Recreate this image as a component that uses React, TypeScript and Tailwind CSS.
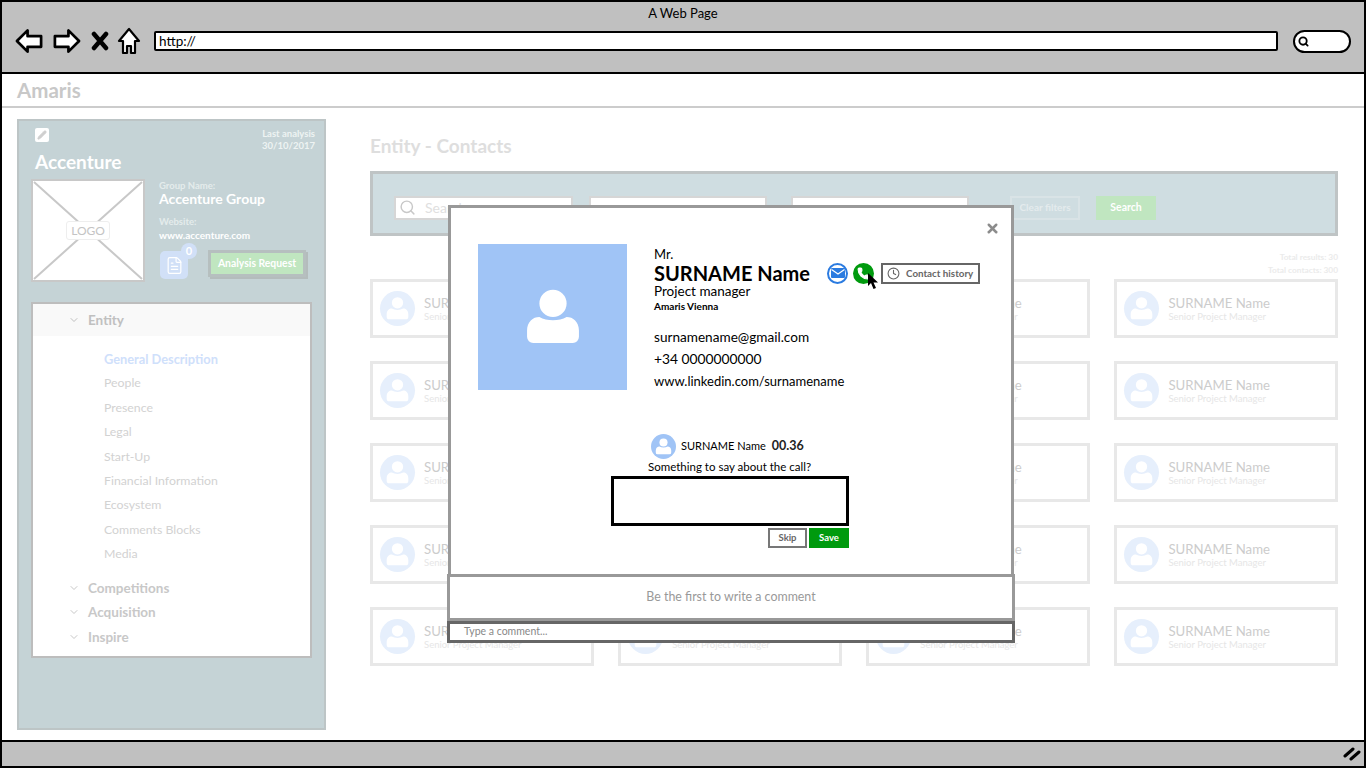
import React from 'react';
import { ChevronDown, Search, FileText, Pencil, Phone, Clock, X } from 'lucide-react';

const MENU_ITEMS = ['People', 'Presence', 'Legal', 'Start-Up', 'Financial Information', 'Ecosystem', 'Comments Blocks', 'Media'];
const CARDS = Array.from({ length: 20 }, (_, i) => i);

const Person: React.FC<{ className?: string; fill?: string }> = ({ className, fill = '#ffffff' }) => (
    <svg viewBox="0 0 34 34" className={className}>
        <circle cx="17" cy="11.5" r="5.5" fill={fill} />
        <path d="M9 27.5a2.5 2.5 0 0 1-2.5-2.5v-2.5c0-3.6 2.4-5.5 5-5.5 3 1.800 8 1.800 11 0 2.600 0 5 1.900 5 5.500V25a2.500 2.500 0 0 1-2.500 2.500z" fill={fill} />
    </svg>
);

const ContactCard: React.FC = () => (
    <div className="flex h-[59px] items-center border-[3px] border-[#e8e8e8] bg-white pl-[7px]">
        <div className="flex h-[35px] w-[35px] shrink-0 items-center justify-center rounded-full bg-[#e6effc]">
            <Person className="h-[35px] w-[35px]" />
        </div>
        <div className="ml-[9px]">
            <div className="text-[13.200px] leading-[16px] text-[#cccccc]">SURNAME Name</div>
            <div className="text-[9.500px] leading-[12px] text-[#e6e6e6]">Senior Project Manager</div>
        </div>
    </div>
);

const Sidebar: React.FC = () => (
    <aside className="flex h-[611px] w-[309px] shrink-0 flex-col border-2 border-[#bdc5c6] bg-[#c5d3d6] pl-[14px] pr-[9px] pt-[7px]">
        <div className="flex items-start justify-between pl-[2px]">
            <div className="flex h-[14px] w-[14px] items-center justify-center rounded-[2px] bg-white">
                <Pencil className="h-[10px] w-[10px] text-[#cfcfcf]" fill="#cfcfcf" />
            </div>
            <div className="text-right text-[9.500px] font-bold leading-[12px] text-[#eef3f3]">
                <div>Last analysis</div>
                <div>30/10/2017</div>
            </div>
        </div>
        <div className="-mt-[2px] pl-[2px] text-[19px] font-bold leading-[24px] text-white">Accenture</div>
        <div className="-ml-[2px] mt-[5px] flex">
            <div className="relative h-[103px] w-[114px] shrink-0 border-[2px] border-[#c8c8c8] bg-white">
                <svg viewBox="0 0 110 99" preserveAspectRatio="none" className="h-full w-full">
                    <path d="M1 1 109 98M109 1 1 98" stroke="#c8c8c8" strokeWidth="2" fill="none" />
                </svg>
                <div className="absolute left-[33px] top-[40px] flex h-[19px] w-[44px] items-center justify-center rounded-[3px] border border-[#eeeeee] bg-white text-[12px] text-[#c4c4c4]">LOGO</div>
            </div>
            <div className="ml-[14px] flex-1 text-white">
                <div className="mt-[1px] text-[9.500px] font-bold leading-[11px] text-[#e4ecec]">Group Name:</div>
                <div className="text-[14px] font-bold leading-[16px]">Accenture Group</div>
                <div className="mt-[9px] text-[9.500px] font-bold leading-[12px] text-[#e4ecec]">Website:</div>
                <div className="mt-[1px] text-[10px] font-bold leading-[13px]">www.accenture.com</div>
                <div className="mt-[8px] flex">
                    <div className="relative ml-[1px] mt-[1px] flex h-[28px] w-[28px] items-center justify-center rounded-[5px] bg-[#d1e0f7]">
                        <FileText className="h-[19px] w-[19px] text-white" strokeWidth={1.500} />
                        <div className="absolute -right-[9px] -top-[8px] flex h-[16px] w-[16px] items-center justify-center rounded-full bg-[#d1e0f7] text-[11px] font-bold text-white">0</div>
                    </div>
                    <div className="ml-[20px] flex h-[27px] w-[98px] items-center justify-center border-[3px] border-[#b6bfbf] bg-[#c0e6c0] text-[10.400px] font-bold text-white shadow-[2px_2px_0_#b4bcbc]">Analysis Request</div>
                </div>
            </div>
        </div>
        <div className="-ml-[2px] mt-[20px] h-[356px] w-[281px] border-[2px] border-[#bdbdbd] bg-white">
            <div className="flex h-[32px] items-center bg-[#f9f9f9] pl-[35px] text-[13.500px] font-bold text-[#c0c0c0]">
                <ChevronDown className="mr-[8px] h-[12px] w-[12px] text-[#c0c0c0]" />
                Entity
            </div>
            <div className="pl-[71px] pt-[11px] text-[12.300px] leading-[24.400px] text-[#d2d2d2]">
                <div className="text-[12.800px] font-bold text-[#cfe0fb]">General Description</div>
                {MENU_ITEMS.map((item) => (
                    <div key={item}>{item}</div>
                ))}
            </div>
            <div className="mt-[9px] pl-[35px] text-[13.500px] font-bold leading-[24.500px] text-[#c8c8c8]">
                {['Competitions', 'Acquisition', 'Inspire'].map((item) => (
                    <div key={item} className="flex items-center">
                        <ChevronDown className="mr-[8px] h-[12px] w-[12px] text-[#c8c8c8]" />
                        {item}
                    </div>
                ))}
            </div>
        </div>
    </aside>
);

const ContactsPanel: React.FC = () => (
    <main className="ml-[44px] w-[968px] shrink-0">
        <h1 className="mt-[16px] text-[19px] font-bold leading-[22px] text-[#dedede]">Entity - Contacts</h1>
        <div className="mt-[14px] flex h-[65px] items-center border-[3px] border-[#bfc4c5] bg-[#cfdde1] pl-[21px] pt-[8px]">
            <div className="flex h-[24px] w-[179px] items-center border-2 border-[#d6d6d6] bg-white pl-[3px]">
                <Search className="h-[17px] w-[17px] text-[#c8c8c8]" />
                <span className="ml-[9px] text-[14px] text-[#e0e0e0]">Search</span>
            </div>
            <div className="ml-[16px] h-[24px] w-[178px] border-2 border-[#d6d6d6] bg-white" />
            <div className="ml-[24px] h-[24px] w-[178px] border-2 border-[#d6d6d6] bg-white" />
            <div className="ml-[41px] flex h-[24px] w-[70px] items-center justify-center border-2 border-[#d9e3e6] text-[10px] font-bold text-[#e4ebed]">Clear filters</div>
            <div className="ml-[16px] flex h-[24px] w-[60px] items-center justify-center bg-[#c0e6c0] text-[10.500px] font-bold text-white">Search</div>
        </div>
        <div className="mt-[15px] text-right text-[8.300px] font-bold leading-[13px] text-[#ebebeb]">
            <div>Total results: 30</div>
            <div>Total contacts: 300</div>
        </div>
        <div className="mt-[2px] grid grid-cols-4 gap-x-[24.500px] gap-y-[23px]">
            {CARDS.map((card) => (
                <ContactCard key={card} />
            ))}
        </div>
    </main>
);

const ContactModal: React.FC = () => (
    <div className="absolute left-[446px] top-[203px] flex h-[438px] w-[566px] flex-col border-[3px] border-[#999999] bg-white text-black">
        <X className="absolute right-[11px] top-[13px] h-[15px] w-[15px] text-[#8c8c8c]" strokeWidth={4} />
        <div className="flex-1 pl-[27px] pt-[36px]">
            <div className="flex">
                <div className="flex h-[146px] w-[149px] shrink-0 items-center justify-center bg-[#a0c4f6]">
                    <Person className="h-[84px] w-[84px]" />
                </div>
                <div className="relative ml-[27px] pt-[3px]">
                    <div className="text-[13px] leading-[14px]">Mr.</div>
                    <div className="mt-[1px] text-[20px] font-bold leading-[22px]">SURNAME Name</div>
                    <div className="text-[13.500px] leading-[14px]">Project manager</div>
                    <div className="mt-[2px] text-[10px] font-bold leading-[12px]">Amaris Vienna</div>
                    <div className="mt-[14px] text-[13px] leading-[22px]">
                        <div className="text-[13.600px]">surnamename@gmail.com</div>
                        <div className="text-[13.800px]">+34 0000000000</div>
                        <div>www.linkedin.com/surnamename</div>
                    </div>
                    <div className="absolute left-[173px] top-[18px] flex h-[22px] items-center">
                        <div className="flex h-[21px] w-[21px] items-center justify-center rounded-full border-2 border-[#2b7be0] bg-white">
                            <svg viewBox="0 0 14 10" className="h-[10px] w-[14px]">
                                <rect width="14" height="10" rx="1" fill="#2b7be0" />
                                <path d="M0.500 1.500 7 6l6.500-4.500" stroke="#ffffff" strokeWidth="1.200" fill="none" />
                            </svg>
                        </div>
                        <div className="relative ml-[5px] flex h-[21px] w-[21px] items-center justify-center rounded-full bg-[#009a0e]">
                            <Phone className="h-[13px] w-[13px] text-white" fill="#ffffff" />
                            <svg viewBox="0 0 12 18" className="absolute left-[14px] top-[9px] h-[18px] w-[12px]">
                                <path d="M1 1v13l3-3 2.500 6 2.500-1-2.500-5.500H11z" fill="#000000" />
                            </svg>
                        </div>
                        <div className="ml-[7px] flex h-[21px] w-[99px] items-center border-2 border-[#666666] pl-[4px] text-[9.800px] font-bold text-[#666666]">
                            <Clock className="mr-[6px] h-[13px] w-[13px]" />
                            Contact history
                        </div>
                    </div>
                </div>
            </div>
            <div className="ml-[133px] mt-[42px] w-[238px]">
                <div className="ml-[40px] flex h-[25px] items-center">
                    <div className="h-[25px] w-[25px] rounded-full bg-[#a0c4f6]">
                        <Person className="h-[25px] w-[25px]" />
                    </div>
                    <span className="ml-[5px] text-[11px]">SURNAME Name</span>
                    <span className="ml-[6px] text-[12.500px] font-bold text-[#222222]">00.36</span>
                </div>
                <div className="ml-[37px] mt-[1px] text-[11.500px] leading-[14px]">Something to say about the call?</div>
                <div className="mt-[2px] h-[50px] border-[3px] border-black bg-white" />
                <div className="mt-[2px] flex justify-end gap-[2px]">
                    <div className="flex h-[20px] w-[39px] items-center justify-center border-2 border-[#777777] text-[9.500px] font-bold text-[#666666]">Skip</div>
                    <div className="flex h-[20px] w-[40px] items-center justify-center bg-[#009a0e] text-[9.500px] font-bold text-white">Save</div>
                </div>
            </div>
        </div>
        <div className="-mx-[4px] flex h-[47px] items-center justify-center border-[3px] border-[#999999] bg-white text-[12.400px] text-[#999999]">Be the first to write a comment</div>
        <div className="-mx-[4px] -mb-[3px] flex h-[22px] items-center border-[3px] border-[#666666] bg-white pl-[14px] text-[10.500px] text-[#888888]">Type a comment...</div>
    </div>
);

const BrowserBar: React.FC = () => (
    <header className="h-[70px] shrink-0 bg-[#c0c0c0] pt-[3px]">
        <div className="text-center text-[13px] leading-[16px] text-black">A Web Page</div>
        <div className="mt-[6px] flex items-center pl-[13px] pr-[11px]">
            <svg viewBox="0 0 30 26" className="h-[26px] w-[29px]">
                <path d="M2 13 13 2v6h14v11H13v5z" fill="#ffffff" stroke="#000000" strokeWidth="2.800" strokeLinejoin="round" />
            </svg>
            <svg viewBox="0 0 30 26" className="ml-[8px] h-[26px] w-[29px]">
                <path d="M28 13 17 2v6H3v11h14v5z" fill="#ffffff" stroke="#000000" strokeWidth="2.800" strokeLinejoin="round" />
            </svg>
            <svg viewBox="0 0 18 20" className="ml-[10px] h-[20px] w-[18px]">
                <path d="M3 3l12 14M15 3 3 17" stroke="#000000" strokeWidth="4.500" strokeLinecap="round" />
            </svg>
            <svg viewBox="0 0 24 28" className="ml-[8px] h-[28px] w-[24px]">
                <path d="M12 2 2 14h4v12h4v-7h4v7h4V14h4z" fill="#ffffff" stroke="#000000" strokeWidth="2.200" strokeLinejoin="round" />
            </svg>
            <div className="ml-[13px] flex h-[20px] w-[1124px] items-center rounded-[2px] border-[2px] border-black bg-white pl-[3px] text-[13.500px] text-black">http://</div>
            <div className="ml-[15px] flex h-[23px] w-[58px] items-center rounded-[12px] border-[2px] border-black bg-white pl-[3px]">
                <Search className="h-[11px] w-[11px] text-black" strokeWidth={4} />
            </div>
        </div>
    </header>
);

const App: React.FC = () => {
    return (
        <div className="relative flex h-[768px] w-[1366px] flex-col overflow-hidden border-x-[2px] border-t-[2px] border-black bg-white font-['Lato',sans-serif]">
            <BrowserBar />
            <div className="flex h-[36px] shrink-0 items-center border-y-[2px] border-t-black border-b-[#cccccc] bg-white pl-[15px] text-[20.500px] font-bold text-[#c8c8c8]">Amaris</div>
            <div className="flex flex-1 pl-[15px] pt-[11px]">
                <Sidebar />
                <ContactsPanel />
            </div>
            <footer className="flex h-[28px] shrink-0 items-center justify-end border-y-[2px] border-black bg-[#c0c0c0] pr-[3px]">
                <svg viewBox="0 0 18 14" className="h-[14px] w-[18px]">
                    <path d="M2 9 10 2M8 12l8-7" stroke="#000000" strokeWidth="3" strokeLinecap="round" />
                </svg>
            </footer>
            <ContactModal />
        </div>
    );
};

export default App;
